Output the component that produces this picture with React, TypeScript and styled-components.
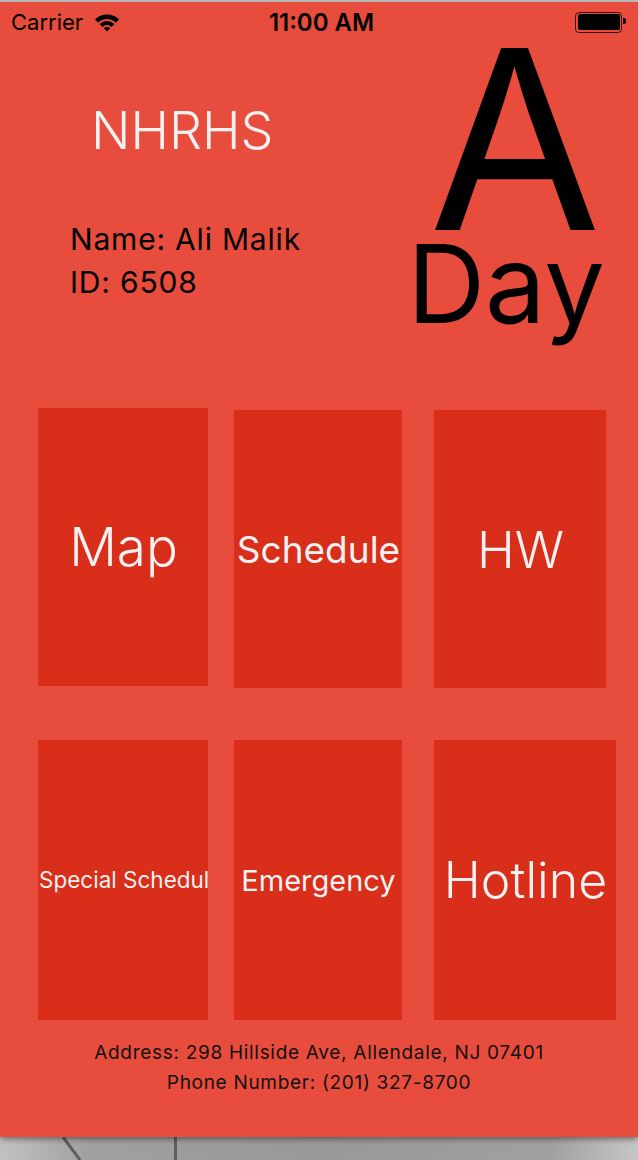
import React from 'react';
import styled, { createGlobalStyle } from 'styled-components';

const GlobalStyle = createGlobalStyle`
  html, body {
    margin: 0;
    padding: 0;
    background: #9a9a9a;
  }
  body {
    font-family: "Inter", "Liberation Sans", sans-serif;
    -webkit-font-smoothing: antialiased;
  }
`;

const red = '#e84c3d';
const tileRed = '#d82e1a';
const tileText = '#f1f1f1';

const Page = styled.div`
  width: 638px;
  height: 1160px;
  display: flex;
  flex-direction: column;
  overflow: hidden;
`;

const TopEdge = styled.div`
  height: 2px;
  background: #c4c4c4;
  flex-shrink: 0;
`;

const Screen = styled.div`
  height: 1135px;
  flex-shrink: 0;
  background: ${red};
  display: flex;
  flex-direction: column;
  position: relative;
  z-index: 1;
  box-shadow: 0 2px 6px rgba(0, 0, 0, 0.45);
`;

const Backdrop = styled.div`
  flex: 1;
  background: linear-gradient(90deg, #c2c2c2 0%, #a0a0a0 14%, #999 50%, #a0a0a0 86%, #c6c6c6 100%);

  svg {
    display: block;
  }
`;

/* Status bar */
const StatusBar = styled.div`
  height: 40px;
  display: flex;
  align-items: center;
  padding: 0 12px 0 11px;
  font-size: 22px;
  color: #000;
`;

const StatusSide = styled.div<{ $end?: boolean }>`
  flex: 1;
  display: flex;
  align-items: center;
  gap: 12px;
  justify-content: ${(p) => (p.$end ? 'flex-end' : 'flex-start')};
`;

const Clock = styled.div`
  font-weight: 600;
  font-size: 24px;
  margin-left: 6px;
`;

const Battery = styled.div`
  width: 42px;
  height: 16px;
  border: 1px solid rgba(0, 0, 0, 0.75);
  border-radius: 4px;
  padding: 1.5px;
  position: relative;
  margin-right: 4px;

  &::before {
    content: '';
    display: block;
    height: 100%;
    border-radius: 2px;
    background: #000;
  }

  &::after {
    content: '';
    position: absolute;
    right: -5px;
    top: 5px;
    width: 3px;
    height: 6px;
    border-radius: 0 2px 2px 0;
    background: #000;
  }
`;

/* Header */
const Header = styled.div`
  height: 366px;
  display: flex;
`;

const Identity = styled.div`
  flex: 1;
  display: flex;
  flex-direction: column;
`;

const SchoolName = styled.h1`
  margin: 63px 0 0 91px;
  font-size: 52px;
  line-height: 1;
  font-weight: 300;
  color: ${tileText};
`;

const Student = styled.div`
  margin: 61px 0 0 70px;
  font-size: 30px;
  letter-spacing: 0.8px;
  line-height: 43px;
  color: #000;
`;

const DayBadge = styled.div`
  width: 232px;
  margin-right: 7px;
  display: flex;
  flex-direction: column;
  align-items: center;
  color: #000;
`;

const DayLetter = styled.div`
  margin-top: 4px;
  font-size: 250px;
  line-height: 0.75;
`;

const DayWord = styled.div`
  margin: -4px 18px 0 0;
  font-size: 108px;
  line-height: 1;
`;

/* Tiles */
const TileRow = styled.div<{ $gapAfter?: number }>`
  display: flex;
  align-items: flex-start;
  padding-left: 38px;
  margin-bottom: ${(p) => p.$gapAfter ?? 0}px;
`;

const Tile = styled.div<{ $w: number; $h: number; $top?: number; $gap?: number }>`
  width: ${(p) => p.$w}px;
  height: ${(p) => p.$h}px;
  margin-top: ${(p) => p.$top ?? 0}px;
  margin-right: ${(p) => p.$gap ?? 0}px;
  flex-shrink: 0;
  background: ${tileRed};
  display: flex;
  align-items: center;
  justify-content: safe center;
  overflow: hidden;
`;

const TileLabel = styled.span<{ $size: number; $light?: boolean }>`
  font-size: ${(p) => p.$size}px;
  line-height: 1;
  font-weight: ${(p) => (p.$light ? 300 : 400)};
  color: ${tileText};
  white-space: nowrap;
  padding-left: 1px;
`;

/* Footer */
const Footer = styled.div`
  margin-top: 18px;
  text-align: center;
  font-size: 19px;
  letter-spacing: 0.7px;
  line-height: 30px;
  color: #111;
`;

const WifiIcon = () => (
  <svg width="24" height="19" viewBox="0 0 24 19">
    <path d="M12 18.5 L8.82 15.32 A4.5 4.5 0 0 1 15.18 15.32 Z" fill="#000" />
    <path d="M4.58 11.08 A10.5 10.5 0 0 1 19.42 11.08 L16.6 13.9 A6.5 6.5 0 0 0 7.4 13.9 Z" fill="#000" />
    <path d="M-0.02 6.48 A17 17 0 0 1 24.02 6.48 L20.84 9.66 A12.5 12.5 0 0 0 3.16 9.66 Z" fill="#000" />
  </svg>
);

const tiles = [
  [
    { label: 'Map', w: 170, h: 278, top: 0, gap: 26, size: 53, light: true },
    { label: 'Schedule', w: 168, h: 278, top: 2, gap: 32, size: 37 },
    { label: 'HW', w: 172, h: 278, top: 2, gap: 0, size: 51, light: true },
  ],
  [
    { label: 'Special Schedule', w: 170, h: 280, top: 0, gap: 26, size: 22.5 },
    { label: 'Emergency', w: 168, h: 280, top: 0, gap: 32, size: 29 },
    { label: 'Hotline', w: 182, h: 280, top: 0, gap: 0, size: 50, light: true },
  ],
];

export default function App() {
  return (
    <Page>
      <GlobalStyle />
      <TopEdge />
      <Screen>
        <StatusBar>
          <StatusSide>
            <span>Carrier</span>
            <WifiIcon />
          </StatusSide>
          <Clock>11:00 AM</Clock>
          <StatusSide $end>
            <Battery />
          </StatusSide>
        </StatusBar>

        <Header>
          <Identity>
            <SchoolName>NHRHS</SchoolName>
            <Student>
              Name: Ali Malik
              <br />
              ID: 6508
            </Student>
          </Identity>
          <DayBadge>
            <DayLetter>A</DayLetter>
            <DayWord>Day</DayWord>
          </DayBadge>
        </Header>

        {tiles.map((row, i) => (
          <TileRow key={i} $gapAfter={i === 0 ? 52 : 0}>
            {row.map((t) => (
              <Tile key={t.label} $w={t.w} $h={t.h} $top={t.top} $gap={t.gap}>
                <TileLabel $size={t.size} $light={t.light}>
                  {t.label}
                </TileLabel>
              </Tile>
            ))}
          </TileRow>
        ))}

        <Footer>
          Address: 298 Hillside Ave, Allendale, NJ 07401
          <br />
          Phone Number: (201) 327-8700
        </Footer>
      </Screen>
      <Backdrop>
        <svg width="638" height="23" viewBox="0 0 638 23">
          <line x1="63" y1="0" x2="80" y2="23" stroke="#5e5e5e" strokeWidth="3" />
          <line x1="175.5" y1="0" x2="175.5" y2="23" stroke="#5e5e5e" strokeWidth="3" />
        </svg>
      </Backdrop>
    </Page>
  );
}
